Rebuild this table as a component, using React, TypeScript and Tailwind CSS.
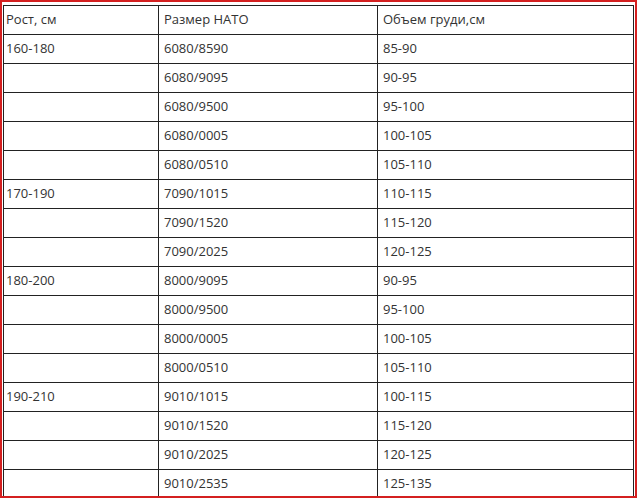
const rows: [string, string, string][] = [
  ["160-180", "6080/8590", "85-90"],
  ["", "6080/9095", "90-95"],
  ["", "6080/9500", "95-100"],
  ["", "6080/0005", "100-105"],
  ["", "6080/0510", "105-110"],
  ["170-190", "7090/1015", "110-115"],
  ["", "7090/1520", "115-120"],
  ["", "7090/2025", "120-125"],
  ["180-200", "8000/9095", "90-95"],
  ["", "8000/9500", "95-100"],
  ["", "8000/0005", "100-105"],
  ["", "8000/0510", "105-110"],
  ["190-210", "9010/1015", "100-115"],
  ["", "9010/1520", "115-120"],
  ["", "9010/2025", "120-125"],
  ["", "9010/2535", "125-135"],
];

export default function App() {
  return (
    <div
      className="w-[637px] h-[498px] overflow-hidden border-2 border-[#d42020] bg-white text-[13px] text-[#333]"
      style={{ fontFamily: '"Open Sans", "Liberation Sans", sans-serif' }}
    >
      <table className="mt-[3px] ml-px w-[631px] table-fixed border-collapse">
        <colgroup>
          <col className="w-[155px]" />
          <col className="w-[219px]" />
          <col />
        </colgroup>
        <thead>
          <tr>
            <th className="h-[29px] border border-[#222] pl-[2px] text-left font-normal">Рост, см</th>
            <th className="h-[29px] border border-[#222] pl-[5px] text-left font-normal">Размер НАТО</th>
            <th className="h-[29px] border border-[#222] pl-[5px] text-left font-normal">Объем груди,см</th>
          </tr>
        </thead>
        <tbody>
          {rows.map((r, i) => (
            <tr key={i}>
              <td className="h-[29px] border border-[#222] pl-[2px]">{r[0]}</td>
              <td className="h-[29px] border border-[#222] pl-[5px]">{r[1]}</td>
              <td className="h-[29px] border border-[#222] pl-[5px]">{r[2]}</td>
            </tr>
          ))}
        </tbody>
      </table>
    </div>
  );
}
